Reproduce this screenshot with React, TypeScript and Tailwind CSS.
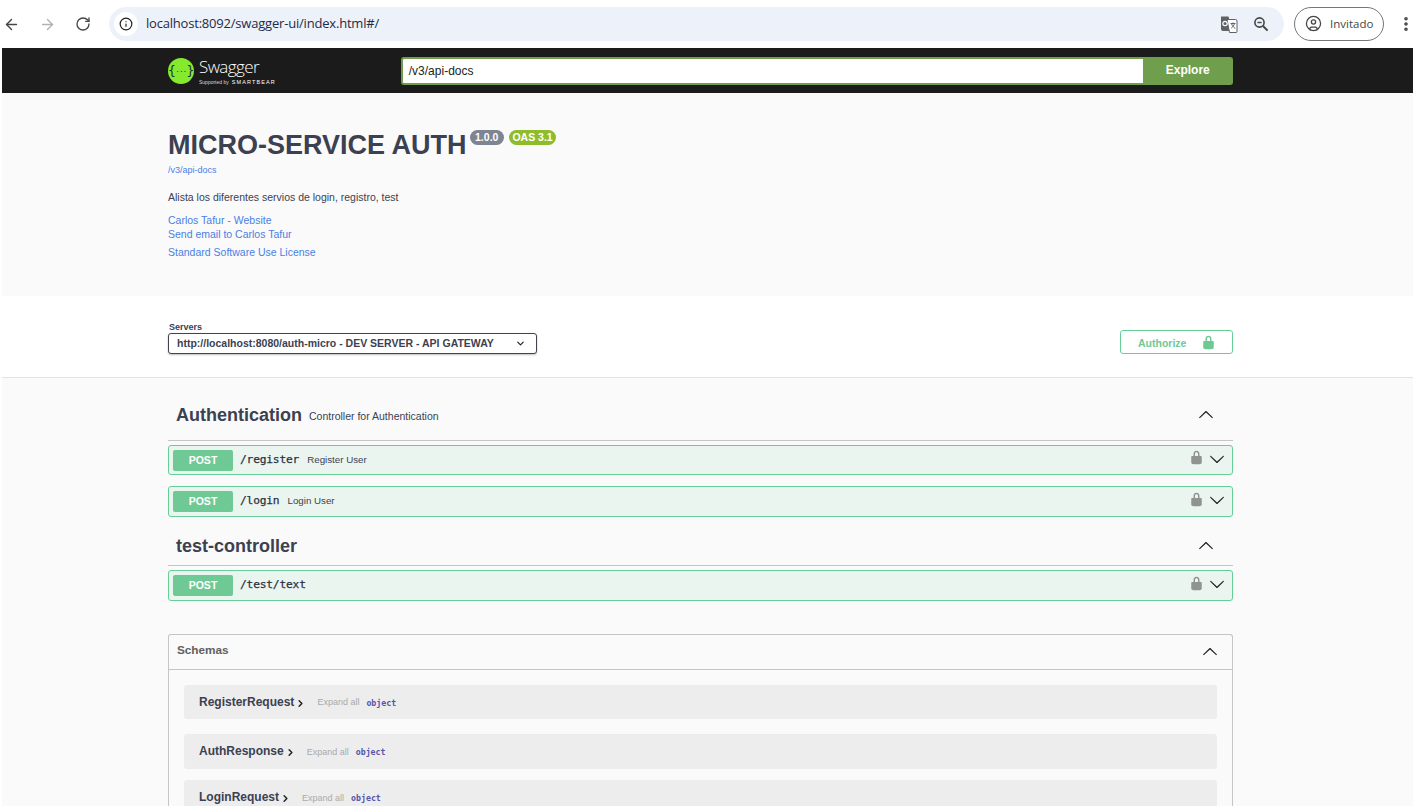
import { ArrowLeft, ArrowRight, ChevronDown, ChevronRight, CircleUser, EllipsisVertical, Info, RotateCw } from "lucide-react";

const sans = "font-['Liberation_Sans',Arial,sans-serif]";
const mono = "font-['DejaVu_Sans_Mono','Liberation_Mono',monospace]";

const LockIcon = ({ className }: { className: string }) => (
  <svg viewBox="0 0 20 20" className={className} fill="currentColor">
    <path d="M15.8 8H14V5.6C14 2.703 12.665 1 10 1 7.334 1 6 2.703 6 5.6V8H4c-.553 0-1 .646-1 1.199V17c0 .549.428 1.139.951 1.307l1.197.387C5.672 18.861 6.55 19 7.1 19h5.8c.549 0 1.428-.139 1.951-.307l1.196-.387c.524-.167.953-.757.953-1.306V9.199C17 8.646 16.352 8 15.8 8zM12 8H8V5.199C8 3.754 8.797 3 10 3c1.203 0 2 .754 2 2.199V8z" />
  </svg>
);

// same arrow swagger uses for expand / collapse
const Arrow = ({ className }: { className: string }) => (
  <svg viewBox="0 0 20 20" className={className} fill="currentColor">
    <path d="M17.418 6.109c.272-.268.709-.268.979 0s.271.701 0 .969l-7.908 7.83c-.27.268-.707.268-.979 0l-7.908-7.83c-.27-.268-.27-.701 0-.969.271-.268.709-.268.979 0L10 13.25l7.418-7.141z" />
  </svg>
);

const TranslateIcon = () => (
  <svg viewBox="0 0 18 18" className="w-[18px] h-[18px]">
    <path d="M1 1.5h7.5L13 16H3a2 2 0 0 1-2-2z" fill="#5f6368" />
    <path d="M7 4.5h8.5a1.5 1.5 0 0 1 1.5 1.5v10.5a1 1 0 0 1-1 1H9.5z" fill="#fff" stroke="#5f6368" strokeWidth="1" />
    <circle cx="5" cy="8.5" r="2.2" fill="none" stroke="#fff" strokeWidth="1.2" />
    <path d="M10.5 8.5h5M13 7.5v1M11.5 8.5c.6 2.4 2 4 3.8 5M14.5 8.5c-.5 2-1.8 3.6-3.2 4.6" fill="none" stroke="#5f6368" strokeWidth="1" />
  </svg>
);

const ZoomOutIcon = () => (
  <svg viewBox="0 0 16 16" className="w-[16px] h-[16px]" fill="none" stroke="#444746">
    <circle cx="6.5" cy="6.5" r="4.6" strokeWidth="1.6" />
    <path d="M4.4 6.5h4.2" strokeWidth="1.4" />
    <path d="M10 10l4.6 4.6" strokeWidth="2" />
  </svg>
);

const SwaggerLogo = () => (
  <div className="flex items-center gap-[5px]">
    <div className={`w-[26px] h-[26px] rounded-full bg-[#85ea2d] flex items-center justify-center text-[#173647] text-[13px] tracking-[-0.5px] ${mono}`}>
      {"{"}<span className="text-[7px]">...</span>{"}"}
    </div>
    <div className="flex flex-col">
      <span className="font-['Open_Sans',sans-serif] font-light text-white text-[17px] leading-[22px] tracking-[-0.6px]">Swagger</span>
      <div className="flex items-center gap-[3px] text-white leading-[7px] mt-[1px]">
        <span className={`${sans} text-[5px] text-gray-300`}>Supported by</span>
        <span className={`${sans} text-[5.5px] tracking-[1.1px]`}>SMARTBEAR</span>
      </div>
    </div>
  </div>
);

const Operation = ({ path, summary, h }: { path: string; summary?: string; h: string }) => (
  <div className={`${h} flex items-center border border-[#66cf98] rounded-[3px] bg-[#ebf5f0] pl-[4px] pr-[7px]`}>
    <span className={`w-[60px] h-[21px] flex items-center justify-center rounded-[2px] bg-[#6fc994] text-white text-[10.5px] font-bold pt-[1px] ${sans}`}>POST</span>
    <span className={`ml-[7px] text-[11.25px] text-[#2c3140] [-webkit-text-stroke:0.25px] ${mono} tracking-[-0.2px]`}>{path}</span>
    {summary && <span className={`ml-[8px] text-[9.75px] text-[#3b4151] ${sans}`}>{summary}</span>}
    <LockIcon className="ml-auto w-[15px] h-[15px] text-[#8f9492] mb-[5px]" />
    <Arrow className="ml-[5px] w-[16px] h-[16px] text-[#222] mb-[3px]" />
  </div>
);

const TagHeader = ({ name, desc, h }: { name: string; desc?: string; h: string }) => (
  <div className={`${h} flex items-center border-b border-[#c4c5c7] pl-[8px]`}>
    <span className={`text-[18px] font-bold text-[#3b4151] ${sans}`}>{name}</span>
    {desc && <span className={`ml-[7px] mt-[3px] text-[10.5px] text-[#3b4151] ${sans}`}>{desc}</span>}
    <Arrow className="ml-auto mr-[19px] mb-[2px] w-[16px] h-[16px] text-[#222] rotate-180" />
  </div>
);

const SchemaRow = ({ name, h }: { name: string; h: string }) => (
  <div className={`${h} shrink-0 flex items-center rounded-[3px] bg-[#ededed] pl-[15px] ${sans}`}>
    <span className="text-[12px] font-bold text-[#3b4151] mb-[1px]">{name}</span>
    <ChevronRight className="ml-[1px] w-[11px] h-[11px] text-[#222] mt-[2px]" strokeWidth={3.2} />
    <span className="ml-[11px] text-[9px] text-[#aaa] mt-[2px]">Expand all</span>
    <span className={`ml-[7px] text-[8.25px] font-semibold text-[#55a] mt-[2px] ${mono}`}>object</span>
  </div>
);

export default function App() {
  return (
    <div className={`w-[1413px] h-[806px] overflow-hidden bg-white flex flex-col ${sans}`}>
      {/* browser chrome */}
      <div className="h-[48px] shrink-0 flex items-center bg-white">
        <ArrowLeft className="shrink-0 ml-[3px] w-[17px] h-[17px] text-[#444746]" strokeWidth={2} />
        <ArrowRight className="shrink-0 ml-[19px] w-[17px] h-[17px] text-[#b0b2b3]" strokeWidth={2} />
        <RotateCw className="shrink-0 ml-[19px] w-[16px] h-[16px] text-[#444746]" strokeWidth={2} />
        <div className="shrink-0 ml-[18px] w-[1175px] h-[34px] mb-[1px] rounded-full bg-[#edf2fa] flex items-center pl-[5px] pr-[15px]">
          <div className="w-[24px] h-[24px] rounded-full bg-white flex items-center justify-center">
            <Info className="w-[14px] h-[14px] text-[#1f1f1f]" strokeWidth={2} />
          </div>
          <span className="ml-[8px] font-['Open_Sans',sans-serif] text-[13px] tracking-[-0.2px] text-[#1f2a44]">localhost:8092/swagger-ui/index.html#/</span>
          <div className="ml-auto flex items-center gap-[15px]">
            <TranslateIcon />
            <ZoomOutIcon />
          </div>
        </div>
        <div className="shrink-0 ml-[10px] w-[90px] h-[34px] mb-[1px] rounded-full border border-[#747775] flex items-center pl-[10px]">
          <CircleUser className="w-[17px] h-[17px] text-[#444746]" strokeWidth={1.8} />
          <span className="ml-[8px] font-['Open_Sans',sans-serif] text-[11.5px] text-[#444746]">Invitado</span>
        </div>
        <EllipsisVertical className="shrink-0 ml-[13px] w-[18px] h-[18px] text-[#444746]" strokeWidth={2.8} />
      </div>

      {/* page */}
      <div className="flex-1 ml-[2px] flex flex-col bg-[#fafafa] min-h-0">
        <div className="h-[45px] shrink-0 bg-[#1b1b1b] pl-[166px] flex items-center">
          <SwaggerLogo />
          <div className="ml-[125px] flex h-[28px]">
            <div className="w-[742px] h-[28px] bg-white border-2 border-r-0 border-[#6f9f4c] rounded-l-[3px] flex items-center pl-[6px] text-[12px] text-[#222]">/v3/api-docs</div>
            <div className="w-[90px] h-[28px] bg-[#6f9f4c] rounded-r-[3px] flex items-center justify-center text-white text-[12px] font-bold pb-[2px]">Explore</div>
          </div>
        </div>

        <div className="h-[203px] shrink-0 pl-[166px] pt-[36px]">
          <div className="flex items-start">
            <h1 className="text-[27px] leading-[33px] font-bold text-[#3b4151]">MICRO-SERVICE AUTH</h1>
            <span className="ml-[3px] mt-[1px] h-[15px] px-[5.5px] rounded-full bg-[#7d8492] text-white text-[10.5px] font-bold leading-[15px]">1.0.0</span>
            <span className="ml-[5px] mt-[1px] h-[15px] px-[3.5px] rounded-full bg-[#8fbc2a] text-white text-[10.5px] font-bold leading-[15px]">OAS 3.1</span>
          </div>
          <div className="mt-[2px] text-[9px] leading-[12px] text-[#4a7fe2]">/v3/api-docs</div>
          <p className="mt-[14px] text-[10.5px] leading-[14px] text-[#3b4151]">Alista los diferentes servios de login, registro, test</p>
          <div className="mt-[9px] text-[10.5px] leading-[14px] text-[#4a7fe2]">Carlos Tafur - Website</div>
          <div className="text-[10.5px] leading-[14px] text-[#4a7fe2]">Send email to Carlos Tafur</div>
          <div className="mt-[4px] text-[10.5px] leading-[14px] text-[#4a7fe2]">Standard Software Use License</div>
        </div>

        <div className="h-[82px] shrink-0 bg-white border-b border-[#e3e3e3] pl-[166px] pr-[180px] pt-[26px] flex justify-between">
          <div>
            <div className="text-[9px] leading-[11px] font-bold text-[#3b4151] pl-[1px]">Servers</div>
            <div className="w-[369px] h-[21px] rounded-[3px] border border-[#41444e] shadow-[0_1px_2px_rgba(0,0,0,0.25)] bg-white flex items-center pl-[8px] pr-[10px] text-[10.5px] font-bold text-[#3b4151]">
              http://localhost:8080/auth-micro - DEV SERVER - API GATEWAY
              <ChevronDown className="ml-auto w-[11px] h-[11px] text-[#222]" strokeWidth={2.6} />
            </div>
          </div>
          <div className="mt-[8px] w-[113px] h-[24px] rounded-[3px] border border-[#66cf98] flex items-center pl-[17px] pt-[1px] text-[10.5px] font-bold text-[#6fc994]">
            <span className="mt-[2px]">Authorize</span>
            <LockIcon className="ml-[15px] w-[15px] h-[15px] text-[#6fc994]" />
          </div>
        </div>

        <div className="pl-[166px] pr-[180px] flex flex-col min-h-0">
          <TagHeader name="Authentication" desc="Controller for Authentication" h="h-[63px] pt-[13px] shrink-0" />
          <div className="mt-[4px] flex flex-col gap-[11px]">
            <Operation path="/register" summary="Register User" h="h-[30px]" />
            <Operation path="/login" summary="Login User" h="h-[31px]" />
          </div>
          <TagHeader name="test-controller" h="h-[49px] pt-[11px] shrink-0" />
          <div className="mt-[4px]">
            <Operation path="/test/text" h="h-[31px]" />
          </div>

          <div className="mt-[33px] h-[172px] border border-b-0 border-[#c4c5c7] rounded-t-[3px] overflow-hidden flex flex-col">
            <div className="h-[35px] shrink-0 border-b border-[#c4c5c7] flex items-center pl-[8px] pr-[14px]">
              <span className="mb-[5px] text-[11.75px] font-bold text-[#606060]">Schemas</span>
              <Arrow className="ml-auto mb-[1px] w-[16px] h-[16px] text-[#222] rotate-180" />
            </div>
            <div className="pt-[15px] px-[15px] flex flex-col">
              <SchemaRow name="RegisterRequest" h="h-[34px]" />
              <SchemaRow name="AuthResponse" h="h-[35px] mt-[15px]" />
              <SchemaRow name="LoginRequest" h="h-[35px] mt-[11px]" />
            </div>
          </div>
        </div>
      </div>
    </div>
  );
}
